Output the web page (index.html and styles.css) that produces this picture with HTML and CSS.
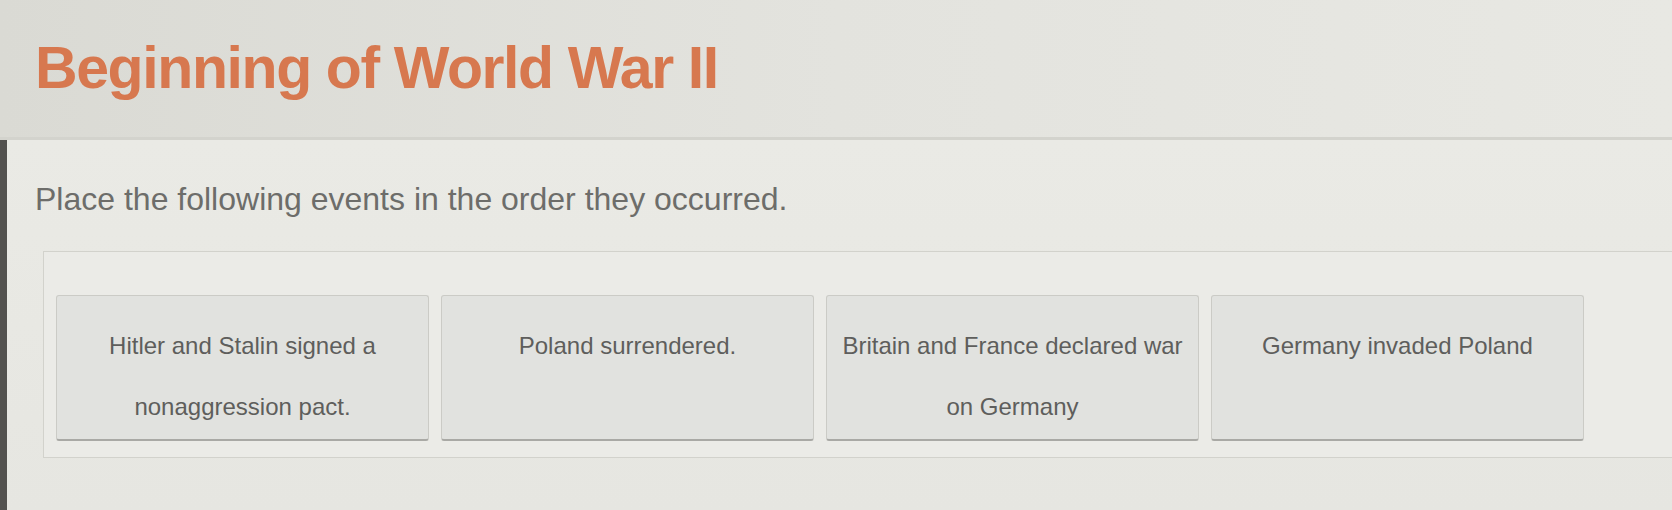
FILE: index.html
```html
<!DOCTYPE html>
<html lang="en">
<head>
    <meta charset="UTF-8">
    <meta name="viewport" content="width=device-width, initial-scale=1.0">
    <title>Beginning of World War II</title>
    <link rel="stylesheet" href="styles.css">
</head>
<body>
    <div class="header">
        <h1 class="title">Beginning of World War II</h1>
    </div>
    <div class="task">
        <p class="prompt">Place the following events in the order they occurred.</p>
        <!-- 可拖动的事件卡片 -->
        <div class="drop-zone">
            <div class="card">Hitler and Stalin signed a nonaggression pact.</div>
            <div class="card">Poland surrendered.</div>
            <div class="card">Britain and France declared war on Germany</div>
            <div class="card">Germany invaded Poland</div>
        </div>
    </div>
</body>
</html>
```

FILE: styles.css
```css
* {
    box-sizing: border-box;
}

body {
    margin: 0;
    background-color: #e6e6e1;
    font-family: "Liberation Sans", Arial, sans-serif;
}

/* 顶部标题栏 */
.header {
    height: 140px;
    padding: 38px 0 0 35px;
    background: linear-gradient(to right, #dadad4, #e3e3de 50%, #e8e8e3);
    border-bottom: 3px solid #d3d3cd;
}

.title {
    margin: 0;
    font-size: 59px;
    line-height: 60px;
    font-weight: bold;
    letter-spacing: -1.4px;
    color: #d7784f;
}

/* 题目区域 */
.task {
    padding: 41px 0 0 0;
    height: 370px;
    background:
        linear-gradient(to right, #53524f 0, #53524f 7px, transparent 7px),
        linear-gradient(to bottom, #eaeae5, #e6e6e1);
}

.prompt {
    margin: 0 0 0 35px;
    font-size: 32px;
    line-height: 36px;
    color: #6d6d6a;
}

.drop-zone {
    margin: 34px 0 0 43px;
    padding: 43px 12px 16px 12px;
    border: 1px solid #d2d2cc;
    border-right: none;
    background-color: #ebebe7;
    display: grid;
    grid-template-columns: repeat(4, 373px);
    gap: 12px;
}

.card {
    height: 146px;
    padding: 19px 12px 0 12px;
    background-color: #e1e2df;
    border: 1px solid #cbcbc6;
    border-bottom: 2px solid #a9a9a5;
    border-radius: 3px;
    text-align: center;
    font-size: 24px;
    line-height: 61px;
    color: #5e5e5c;
}
```
